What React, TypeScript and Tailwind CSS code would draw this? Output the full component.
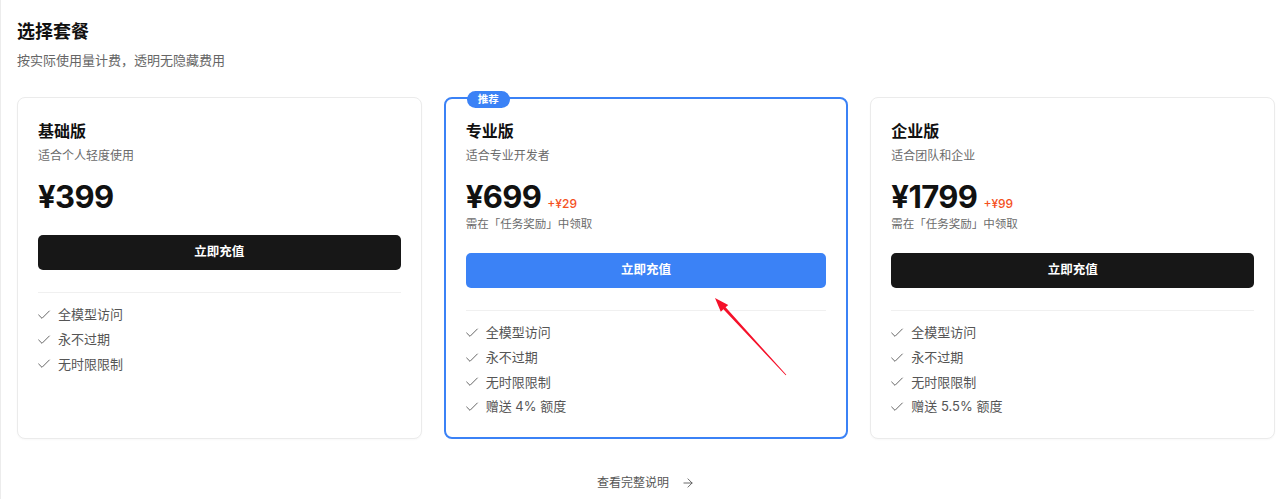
import { Check, ArrowRight } from "lucide-react";

type Plan = {
    name: string;
    desc: string;
    price: string;
    bonus?: string;
    features: string[];
    featured?: boolean;
};

const plans: Plan[] = [
    {
        name: "基础版",
        desc: "适合个人轻度使用",
        price: "¥399",
        features: ["全模型访问", "永不过期", "无时限限制"],
    },
    {
        name: "专业版",
        desc: "适合专业开发者",
        price: "¥699",
        bonus: "+¥29",
        features: ["全模型访问", "永不过期", "无时限限制", "赠送 4% 额度"],
        featured: true,
    },
    {
        name: "企业版",
        desc: "适合团队和企业",
        price: "¥1799",
        bonus: "+¥99",
        features: ["全模型访问", "永不过期", "无时限限制", "赠送 5.5% 额度"],
    },
];

function PlanCard({ plan }: { plan: Plan }) {
    return (
        <div
            className={
                plan.featured
                    ? "relative rounded-lg border-2 border-[#3b82f6] bg-white px-5 pt-5 pb-5"
                    : "relative rounded-lg border border-[#ebebeb] bg-white px-5 pt-[21px] pb-5 shadow-[0_1px_2px_rgba(0,0,0,0.03)]"
            }
        >
            {plan.featured && (
                <span className="absolute -top-[8px] left-[21px] rounded-full bg-[#3b82f6] px-[11px] text-[10.5px] font-bold leading-[17px] text-white">
                    推荐
                </span>
            )}

            <h3 className="text-base font-bold leading-6 text-[#111]">{plan.name}</h3>
            <p className="mt-[5px] text-xs leading-4 text-[#6b6b6b]">{plan.desc}</p>

            <div className="mt-[17px] flex items-baseline gap-1.5">
                <span className="text-[31px] font-bold leading-none tracking-[-0.6px] text-[#111]">{plan.price}</span>
                {plan.bonus && (
                    <span className="text-xs font-medium text-[#f4511e]">{plan.bonus}</span>
                )}
            </div>

            {plan.bonus && (
                <p className="mt-1 text-[11.5px] leading-4 text-[#6b6b6b]">需在「任务奖励」中领取</p>
            )}

            <button
                className={
                    (plan.bonus ? "mt-[21px] " : "mt-[23px] ") +
                    (plan.featured
                        ? "flex h-[35px] w-full items-center justify-center rounded-[5px] bg-[#3b82f6] text-[12.5px] font-bold text-white"
                        : "flex h-[35px] w-full items-center justify-center rounded-[5px] bg-[#171717] text-[12.5px] font-bold text-white")
                }
            >
                立即充值
            </button>

            <div className="mt-[22px] h-px bg-[#f0f0f0]"></div>

            <ul className="mt-3 flex flex-col gap-[4.7px]">
                {plan.features.map((f) => (
                    <li key={f} className="flex h-5 items-center gap-1.5 text-[13px] text-[#555]">
                        <Check size={16} strokeWidth={1.5} className="-ml-0.5 shrink-0 text-[#666]" />
                        <span>{f}</span>
                    </li>
                ))}
            </ul>
        </div>
    );
}

export default function App() {
    return (
        <div className="relative h-[499px] w-full overflow-hidden border-l border-[#ececec] bg-white font-['Inter','Noto_Sans_CJK_SC',sans-serif]">
            <div className="pl-4 pr-[5px] pt-[18px]">
                <h1 className="text-lg font-bold leading-7 text-[#111]">选择套餐</h1>
                <p className="mt-[4px] text-[13px] leading-5 text-[#666]">按实际使用量计费，透明无隐藏费用</p>

                <div className="mt-[27px] grid grid-cols-3 gap-[22px]">
                    {plans.map((p) => (
                        <PlanCard key={p.name} plan={p} />
                    ))}
                </div>

                <div className="mt-[34px] flex items-center justify-center gap-3 text-xs leading-5 text-[#555]">
                    <span>查看完整说明</span>
                    <ArrowRight size={14} strokeWidth={1.5} />
                </div>
            </div>

            {/* annotation arrow */}
            <svg
                className="pointer-events-none absolute left-0 top-0"
                width="1280"
                height="499"
                viewBox="0 0 1280 499"
            >
                <polygon
                    fill="#f5112a"
                    points="714,298 727.2,304.9 724.6,307.3 785.3,374.7 784.7,375.3 722.4,309.3 719.8,311.7"
                />
            </svg>
        </div>
    );
}
